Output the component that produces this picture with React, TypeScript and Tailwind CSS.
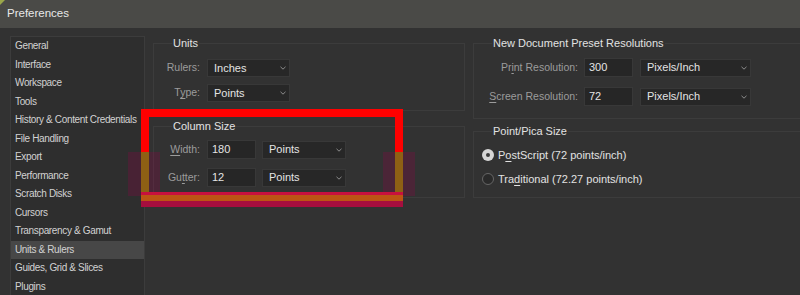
import React from "react";

const items = [
  "General",
  "Interface",
  "Workspace",
  "Tools",
  "History & Content Credentials",
  "File Handling",
  "Export",
  "Performance",
  "Scratch Disks",
  "Cursors",
  "Transparency & Gamut",
  "Units & Rulers",
  "Guides, Grid & Slices",
  "Plugins",
];

function Chevron() {
  return (
    <svg width="6" height="4" viewBox="0 0 6 4" className="shrink-0">
      <polyline points="0.5,0.8 3,3.2 5.5,0.8" fill="none" stroke="#8c8c8c" strokeWidth="1" />
    </svg>
  );
}

function Select({ value, className }: { value: string; className: string }) {
  return (
    <div
      className={
        "flex items-center justify-between bg-[#272727] border border-[#383838] pl-[6px] pr-[3px] text-[11px] text-[#e4e4e4] " +
        className
      }
    >
      <span>{value}</span>
      <Chevron />
    </div>
  );
}

function Input({ value, className }: { value: string; className: string }) {
  return (
    <div
      className={
        "flex items-center bg-[#262626] border border-[#383838] pl-[4px] text-[11px] text-[#e4e4e4] " + className
      }
    >
      {value}
    </div>
  );
}

function Legend({ children }: { children: React.ReactNode }) {
  return (
    <div className="-mt-[8px] ml-[18px] w-fit px-[1px] bg-[#323232] h-[15px] leading-[15px] text-[11px] text-[#e2e2e2]">
      {children}
    </div>
  );
}

export default function App() {
  return (
    <div className="relative w-[800px] h-[295px] overflow-hidden bg-[#323232] font-['Liberation_Sans',Arial,sans-serif]">
      {/* title bar */}
      <div className="h-[28px] bg-[#4a4a47] flex items-center pl-[7px] text-[11.5px] text-[#e8e8e8]">
        Preferences
      </div>
      <svg className="absolute left-0 top-0" width="5" height="5" viewBox="0 0 5 5">
        <polygon points="0,0 5,0 0,5" fill="#9aa64a" />
      </svg>

      <div className="flex pt-[8px]">
        {/* sidebar */}
        <div className="ml-[10px] w-[135px] h-[300px] shrink-0 border border-[#3c3c3c] bg-[#2e2e2e]">
          {items.map((it) => (
            <div
              key={it}
              className={
                "h-[18.5px] leading-[18.5px] pl-[4px] text-[10px] tracking-[-0.35px] text-[#d2d2d2] whitespace-nowrap " +
                (it === "Units & Rulers" ? "bg-[#474747]" : "")
              }
            >
              {it}
            </div>
          ))}
        </div>

        {/* main */}
        <div className="flex gap-[8px] ml-[8px] pt-[7px]">
          {/* left column */}
          <div className="flex flex-col w-[312px] shrink-0">
            <div className="h-[68px] border border-[#3c3c3c] flex flex-col">
              <Legend>Units</Legend>
              <div className="mt-[8px] flex flex-col gap-[7px]">
                <div className="flex items-center h-[18px]">
                  <div className="w-[46px] text-right text-[10.5px] text-[#9c9c9c]">Rulers:</div>
                  <Select value="Inches" className="ml-[7px] w-[83px] h-[18px]" />
                </div>
                <div className="flex items-center h-[18px]">
                  <div className="w-[46px] text-right text-[10.5px] text-[#9c9c9c]">
                    T<span className="underline underline-offset-2">y</span>pe:
                  </div>
                  <Select value="Points" className="ml-[7px] w-[83px] h-[18px]" />
                </div>
              </div>
            </div>

            <div className="mt-[15px] h-[72px] border border-[#3c3c3c] flex flex-col">
              <Legend>Column Size</Legend>
              <div className="mt-[6px] flex flex-col gap-[9px]">
                <div className="flex items-center h-[19px]">
                  <div className="w-[46px] text-right text-[10.5px] text-[#9c9c9c]">
                    <span className="underline underline-offset-2">W</span>idth:
                  </div>
                  <Input value="180" className="ml-[7px] w-[49px] h-[19px]" />
                  <Select value="Points" className="ml-[6px] w-[84px] h-[18px]" />
                </div>
                <div className="flex items-center h-[19px]">
                  <div className="w-[46px] text-right text-[10.5px] text-[#9c9c9c]">
                    Gu<span className="underline underline-offset-2">t</span>ter:
                  </div>
                  <Input value="12" className="ml-[7px] w-[49px] h-[19px]" />
                  <Select value="Points" className="ml-[6px] w-[84px] h-[18px]" />
                </div>
              </div>
            </div>
          </div>

          {/* right column */}
          <div className="flex flex-col w-[340px] shrink-0">
            <div className="h-[76px] border border-[#3c3c3c] flex flex-col">
              <Legend>New Document Preset Resolutions</Legend>
              <div className="mt-[7px] flex flex-col gap-[10px]">
                <div className="flex items-center h-[19px]">
                  <div className="w-[104px] text-right text-[10.5px] text-[#9c9c9c]">
                    Pr<span className="underline underline-offset-2">i</span>nt Resolution:
                  </div>
                  <Input value="300" className="ml-[6px] w-[49px] h-[19px]" />
                  <Select value="Pixels/Inch" className="ml-[7px] w-[111px] h-[18px]" />
                </div>
                <div className="flex items-center h-[19px]">
                  <div className="w-[104px] text-right text-[10.5px] text-[#9c9c9c]">
                    <span className="underline underline-offset-2">S</span>creen Resolution:
                  </div>
                  <Input value="72" className="ml-[6px] w-[49px] h-[19px]" />
                  <Select value="Pixels/Inch" className="ml-[7px] w-[111px] h-[18px]" />
                </div>
              </div>
            </div>

            <div className="mt-[12px] h-[67px] border border-[#3c3c3c] flex flex-col">
              <Legend>Point/Pica Size</Legend>
              <div className="mt-[8px] flex flex-col gap-[8px]">
                <div className="flex items-center h-[16px] ml-[8px]">
                  <div className="w-[12px] h-[12px] rounded-full bg-[#d6d6d6] flex items-center justify-center">
                    <div className="w-[4px] h-[4px] rounded-full bg-[#3a3a3a]" />
                  </div>
                  <div className="ml-[4px] text-[11px] text-[#e2e2e2]">
                    P<span className="underline underline-offset-2">o</span>stScript (72 points/inch)
                  </div>
                </div>
                <div className="flex items-center h-[16px] ml-[8px]">
                  <div className="w-[12px] h-[12px] rounded-full border border-[#666666] bg-[#2a2a2a]" />
                  <div className="ml-[4px] text-[11px] text-[#e2e2e2]">
                    Tra<span className="underline underline-offset-2">d</span>itional (72.27 points/inch)
                  </div>
                </div>
              </div>
            </div>
          </div>
        </div>
      </div>

      {/* red annotation frame overlay */}
      <div className="absolute left-[128px] top-[152px] w-[32px] h-[44px] bg-[rgba(150,0,70,0.25)]" />
      <div className="absolute left-[383px] top-[152px] w-[32px] h-[44px] bg-[rgba(150,0,70,0.25)]" />
      <div className="absolute left-[141px] top-[109px] w-[262px] h-[43px] border-t-[8px] border-x-[8px] border-[#ff0000]" />
      <div className="absolute left-[141px] top-[152px] w-[8px] h-[40px] bg-[#8e6014]" />
      <div className="absolute left-[395px] top-[152px] w-[8px] h-[40px] bg-[#8e6014]" />
      <div className="absolute left-[141px] top-[192px] w-[262px] h-[3px] bg-[#c8103e]" />
      <div className="absolute left-[141px] top-[195px] w-[262px] h-[6px] bg-[#bc5414]" />
      <div className="absolute left-[141px] top-[201px] w-[262px] h-[6px] bg-[#a60e3e]" />
    </div>
  );
}
